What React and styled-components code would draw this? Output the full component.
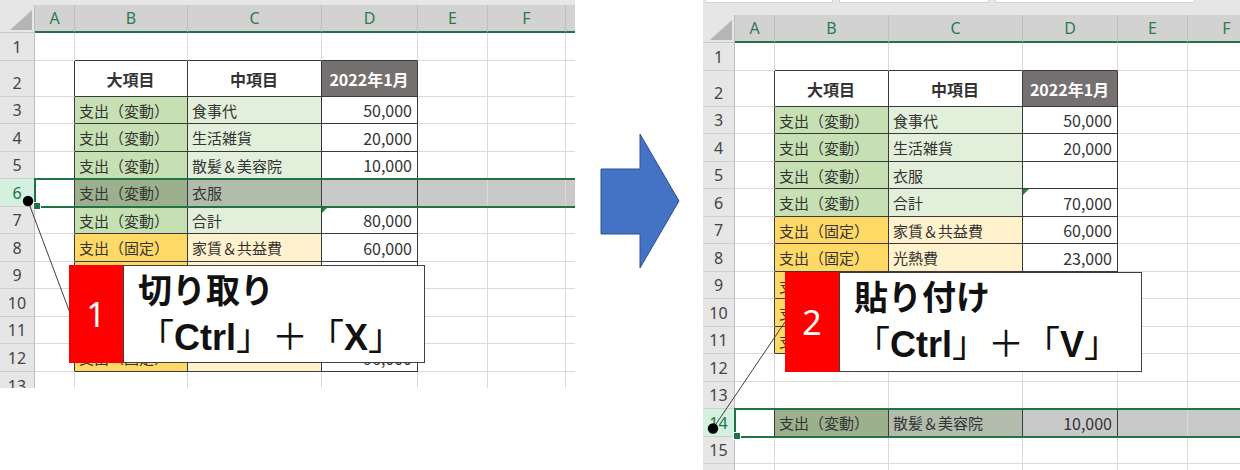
import React from "react";
import styled, { createGlobalStyle, css } from "styled-components";

const GlobalStyle = createGlobalStyle`
  * { box-sizing: border-box; }
  html, body { margin: 0; padding: 0; background: #ffffff; }
  body { font-family: "Noto Sans CJK JP", "Noto Sans", sans-serif; }
`;

const GRID_LINE = "#dadada";
const EDGE_LINE = "#3a3a3a";
const XL_GREEN = "#217346";

const fills = {
  head: "#ffffff",
  dhead: "#767171",
  var: "#c6e0b4",
  varSub: "#e2efda",
  fix: "#ffd966",
  fixSub: "#fff2cc",
  num: "#ffffff",
};

const Page = styled.div`
  display: flex;
  align-items: flex-start;
  width: 1240px;
  height: 470px;
  overflow: hidden;
  background: #fff;
`;

const SheetFrame = styled.div`
  position: relative;
  flex: none;
  width: ${({ $w }) => $w}px;
  height: ${({ $h }) => $h}px;
  overflow: hidden;
  background: #fff;
`;

const Grid = styled.div`
  display: grid;
  grid-template-columns: ${({ $cols }) => $cols};
  grid-template-rows: ${({ $rows }) => $rows};
  font-size: 15px;
  color: #333;
`;

const Strip = styled.div`
  grid-column: 1 / -1;
  display: flex;
  align-items: flex-start;
  gap: 6px;
  padding-left: 2px;
  background: #e6e6e6;
`;

const StripBox = styled.div`
  flex: none;
  width: ${({ $w }) => $w}px;
  height: 3px;
  background: #fff;
  border: 1px solid #d4d4d4;
  border-top: none;
`;

const Corner = styled.div`
  position: relative;
  background: #e6e6e6;
  border-right: 1px solid #bdbdbd;
  border-bottom: 1px solid #c8c8c8;

  &::after {
    content: "";
    position: absolute;
    right: 2px;
    bottom: 2px;
    width: 22px;
    height: 20px;
    background: #b5b5b5;
    clip-path: polygon(100% 0, 100% 100%, 0 100%);
  }
`;

const ColHead = styled.div`
  display: flex;
  align-items: center;
  justify-content: center;
  background: #d2d2d2;
  color: #2f7a50;
  font-family: "Noto Sans", "Liberation Sans", sans-serif;
  font-size: 16px;
  border-right: 1px solid #bdbdbd;
  border-bottom: 2px solid ${XL_GREEN};
`;

const RowHead = styled.div`
  display: flex;
  align-items: flex-end;
  justify-content: center;
  padding-bottom: 2px;
  line-height: 22px;
  background: ${({ $sel }) => ($sel ? "#d3f0e0" : "#e6e6e6")};
  color: ${({ $sel }) => ($sel ? XL_GREEN : "#444")};
  font-family: "Noto Sans", "Liberation Sans", sans-serif;
  font-size: 16px;
  border-right: 1px solid #bdbdbd;
  border-bottom: 1px solid #cfcfcf;
`;

const Cell = styled.div`
  position: relative;
  display: flex;
  align-items: center;
  justify-content: ${({ $align }) => $align};
  padding: 0 5px 0 4px;
  white-space: nowrap;
  overflow: hidden;
  background: ${({ $fill }) => $fill};
  color: ${({ $light }) => ($light ? "#ffffff" : "#333")};
  font-weight: ${({ $bold }) => ($bold ? 700 : 400)};
  font-size: ${({ $num, $bold }) => ($num || $bold ? "16px" : "15px")};
  border-right: 1px solid ${({ $rEdge }) => ($rEdge ? EDGE_LINE : GRID_LINE)};
  border-bottom: 1px solid ${({ $bEdge }) => ($bEdge ? EDGE_LINE : GRID_LINE)};

  ${({ $shade }) =>
    $shade &&
    css`
      box-shadow: inset 0 0 0 300px rgba(0, 0, 0, 0.21);
    `}

  ${({ $flag }) =>
    $flag &&
    css`
      &::before {
        content: "";
        position: absolute;
        left: 0;
        top: 0;
        border-top: 6px solid #1f8a3c;
        border-right: 6px solid transparent;
      }
    `}
`;

const SelBox = styled.div`
  position: absolute;
  left: ${({ $x }) => $x}px;
  top: ${({ $y }) => $y}px;
  right: -10px;
  height: ${({ $h }) => $h}px;
  border: 2px solid ${XL_GREEN};
  pointer-events: none;

  &::after {
    content: "";
    position: absolute;
    left: -3px;
    bottom: -4px;
    width: 6px;
    height: 6px;
    background: ${XL_GREEN};
    border: 1px solid #fff;
  }
`;

const Callout = styled.div`
  position: absolute;
  left: ${({ $x }) => $x}px;
  top: ${({ $y }) => $y}px;
  width: ${({ $w }) => $w}px;
  height: ${({ $h }) => $h}px;
  display: flex;
`;

const Tag = styled.div`
  flex: none;
  width: 54px;
  display: flex;
  align-items: center;
  justify-content: center;
  background: #ff0000;
  color: #ffffff;
  font-family: "Noto Sans", "Liberation Sans", sans-serif;
  font-size: 34px;
`;

const Note = styled.div`
  flex: 1;
  padding: 0 0 0 14px;
  background: #ffffff;
  border: 1.5px solid #404040;
  color: #111;
`;

const NoteTitle = styled.div`
  font-size: 34px;
  line-height: 46px;
  font-weight: 700;
  white-space: nowrap;
`;

const NoteKeys = styled.div`
  font-size: 36px;
  line-height: 44px;
  white-space: nowrap;
`;

const Key = styled.span`
  font-family: "Liberation Sans", "Noto Sans CJK JP", sans-serif;
  font-weight: 700;
`;

const Connector = styled.svg`
  position: absolute;
  left: 0;
  top: 0;
  pointer-events: none;
`;

const ArrowWrap = styled.div`
  flex: none;
  width: 128px;
  padding: 133px 0 0 25px;
`;

const px = (list) => list.map((v) => `${v}px`).join(" ");

function alternating(from, to, first) {
  const out = [];
  for (let n = from; n <= to; n++) {
    out.push({ n, h: (n - from) % 2 === 0 ? first : first === 27 ? 28 : 27 });
  }
  return out;
}

const LETTERS = ["A", "B", "C", "D", "E", "F", "G"];

function Sheet({ spec }) {
  const {
    width,
    height,
    stripH,
    stripBoxes,
    headH,
    rowHeadW,
    cols,
    rows,
    cells,
    inTable,
    selRow,
    callout,
    dot,
    lineTo,
  } = spec;

  const tableAt = (ci, rn) => ci >= 0 && ci < cols.length && inTable(LETTERS[ci], rn);
  const rowNums = rows.map((r) => r.n);

  let selTop = stripH + headH;
  for (const r of rows) {
    if (r.n === selRow) break;
    selTop += r.h;
  }
  const selH = rows.find((r) => r.n === selRow).h;

  return (
    <SheetFrame $w={width} $h={height}>
      <Grid
        $cols={px([rowHeadW, ...cols])}
        $rows={px([stripH, headH, ...rows.map((r) => r.h)])}
      >
        <Strip>
          {stripBoxes.map((w, i) => (
            <StripBox key={i} $w={w} />
          ))}
        </Strip>
        <Corner />
        {cols.map((_, ci) => (
          <ColHead key={ci}>{LETTERS[ci]}</ColHead>
        ))}
        {rows.map((r, ri) => (
          <React.Fragment key={r.n}>
            <RowHead $sel={r.n === selRow}>{r.n}</RowHead>
            {cols.map((_, ci) => {
              const id = `${LETTERS[ci]}${r.n}`;
              const entry = cells[id];
              const kind = entry ? entry[0] : null;
              const own = tableAt(ci, r.n);
              const below = ri + 1 < rowNums.length && tableAt(ci, rowNums[ri + 1]);
              return (
                <Cell
                  key={id}
                  $fill={kind ? fills[kind] : "transparent"}
                  $align={kind === "num" ? "flex-end" : kind === "head" || kind === "dhead" ? "center" : "flex-start"}
                  $bold={kind === "head" || kind === "dhead"}
                  $light={kind === "dhead"}
                  $num={kind === "num"}
                  $rEdge={own || tableAt(ci + 1, r.n)}
                  $bEdge={own || below}
                  $shade={r.n === selRow && ci > 0}
                  $flag={entry && entry[2]}
                >
                  {entry ? entry[1] : ""}
                </Cell>
              );
            })}
          </React.Fragment>
        ))}
      </Grid>

      <SelBox $x={rowHeadW - 1} $y={selTop - 1} $h={selH + 2} />

      <Callout $x={callout.x} $y={callout.y} $w={callout.w} $h={callout.h}>
        <Tag>{callout.num}</Tag>
        <Note>
          <NoteTitle>{callout.title}</NoteTitle>
          <NoteKeys>
            「<Key>Ctrl</Key>」＋「<Key>{callout.key}</Key>」
          </NoteKeys>
        </Note>
      </Callout>

      <Connector width={width} height={height} viewBox={`0 0 ${width} ${height}`}>
        <line x1={dot[0]} y1={dot[1]} x2={lineTo[0]} y2={lineTo[1]} stroke="#3f3f3f" strokeWidth="1" />
        <circle cx={dot[0]} cy={dot[1]} r="5.2" fill="#000" />
      </Connector>
    </SheetFrame>
  );
}

const VAR = "支出（変動）";
const FIX = "支出（固定）";

const leftSheet = {
  width: 575,
  height: 388,
  stripH: 5,
  stripBoxes: [],
  headH: 28,
  rowHeadW: 35,
  cols: [40, 113, 134, 96, 70, 78, 70],
  rows: [{ n: 1, h: 28 }, { n: 2, h: 36 }, ...alternating(3, 12, 27), { n: 13, h: 28 }],
  selRow: 6,
  inTable: (c, r) => ["B", "C", "D"].includes(c) && r >= 2 && r <= 12,
  cells: {
    B2: ["head", "大項目"],
    C2: ["head", "中項目"],
    D2: ["dhead", "2022年1月"],
    B3: ["var", VAR], C3: ["varSub", "食事代"], D3: ["num", "50,000"],
    B4: ["var", VAR], C4: ["varSub", "生活雑貨"], D4: ["num", "20,000"],
    B5: ["var", VAR], C5: ["varSub", "散髪＆美容院"], D5: ["num", "10,000"],
    B6: ["var", VAR], C6: ["varSub", "衣服"], D6: ["num", ""],
    B7: ["var", VAR], C7: ["varSub", "合計"], D7: ["num", "80,000", true],
    B8: ["fix", FIX], C8: ["fixSub", "家賃＆共益費"], D8: ["num", "60,000"],
    B9: ["fix", FIX], C9: ["fixSub", "光熱費"], D9: ["num", "23,000"],
    B10: ["fix", FIX], C10: ["fixSub", "通信費"], D10: ["num", "8,000"],
    B11: ["fix", FIX], C11: ["fixSub", "保険料"], D11: ["num", "5,000"],
    B12: ["fix", FIX], C12: ["fixSub", ""], D12: ["num", "96,000"],
  },
  callout: { x: 69, y: 265, w: 356, h: 98, num: "1", title: "切り取り", key: "X" },
  dot: [28, 201],
  lineTo: [70, 313],
};

const rightSheet = {
  width: 537,
  height: 470,
  stripH: 15,
  stripBoxes: [128, 150, 200],
  headH: 28,
  rowHeadW: 32,
  cols: [40, 114, 134, 95, 70, 78],
  rows: [{ n: 1, h: 28 }, { n: 2, h: 36 }, ...alternating(3, 15, 27), { n: 16, h: 28 }],
  selRow: 14,
  inTable: (c, r) => ["B", "C", "D"].includes(c) && ((r >= 2 && r <= 11) || r === 14),
  cells: {
    B2: ["head", "大項目"],
    C2: ["head", "中項目"],
    D2: ["dhead", "2022年1月"],
    B3: ["var", VAR], C3: ["varSub", "食事代"], D3: ["num", "50,000"],
    B4: ["var", VAR], C4: ["varSub", "生活雑貨"], D4: ["num", "20,000"],
    B5: ["var", VAR], C5: ["varSub", "衣服"], D5: ["num", ""],
    B6: ["var", VAR], C6: ["varSub", "合計"], D6: ["num", "70,000", true],
    B7: ["fix", FIX], C7: ["fixSub", "家賃＆共益費"], D7: ["num", "60,000"],
    B8: ["fix", FIX], C8: ["fixSub", "光熱費"], D8: ["num", "23,000"],
    B9: ["fix", FIX], C9: ["fixSub", "通信費"], D9: ["num", "8,000"],
    B10: ["fix", FIX], C10: ["fixSub", "保険料"], D10: ["num", "5,000"],
    B11: ["fix", FIX], C11: ["fixSub", "合計"], D11: ["num", "96,000"],
    B14: ["var", VAR], C14: ["varSub", "散髪＆美容院"], D14: ["num", "10,000"],
  },
  callout: { x: 82, y: 272, w: 357, h: 100, num: "2", title: "貼り付け", key: "V" },
  dot: [10, 428.5],
  lineTo: [82, 322],
};

function BlockArrow() {
  return (
    <svg width="80" height="136" viewBox="-1 -1 80 136">
      <polygon
        points="0,35 39,35 39,0 78,67 39,134 39,100 0,100"
        fill="#4472c4"
        stroke="#2f528f"
        strokeWidth="1"
      />
    </svg>
  );
}

export default function App() {
  return (
    <>
      <GlobalStyle />
      <Page>
        <Sheet spec={leftSheet} />
        <ArrowWrap>
          <BlockArrow />
        </ArrowWrap>
        <Sheet spec={rightSheet} />
      </Page>
    </>
  );
}
